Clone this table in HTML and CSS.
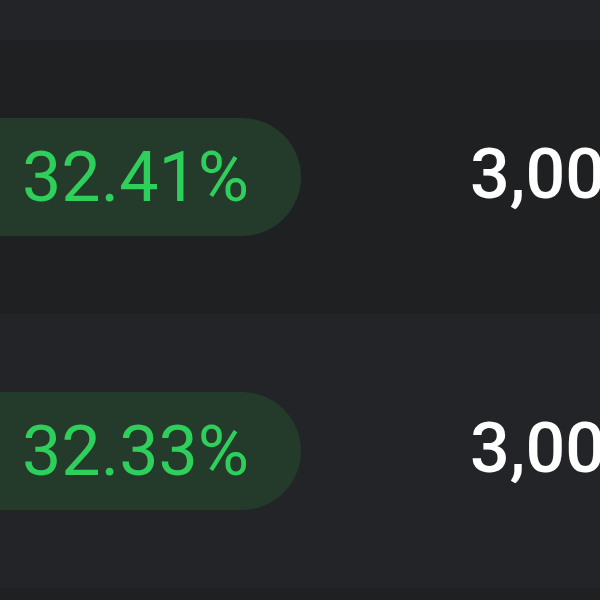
FILE: index.html
```html
<!DOCTYPE html>
<html>
<head>
<meta charset="utf-8">
<link rel="stylesheet" href="styles.css">
</head>
<body>
<div class="table">
  <div class="row row-alt row-top"></div>
  <div class="row">
    <div class="cell-pct"><span class="pill">32.41%</span></div>
    <div class="cell-val">3,000</div>
  </div>
  <div class="row row-alt">
    <div class="cell-pct"><span class="pill">32.33%</span></div>
    <div class="cell-val">3,000</div>
  </div>
  <div class="row row-bottom"></div>
</div>
</body>
</html>
```
FILE: styles.css
```css
html, body {
  margin: 0;
  padding: 0;
  background: #1f2022;
  width: 600px;
  height: 600px;
  overflow: hidden;
}
.table {
  display: flex;
  flex-direction: column;
  width: 600px;
  font-family: Roboto, "Liberation Sans", sans-serif;
}
.row {
  display: flex;
  align-items: center;
  height: 274px;
  background: #1f2022;
  flex-shrink: 0;
}
.row-alt {
  background: #232427;
}
.row-top {
  height: 40px;
}
.row-bottom {
  height: 12px;
}
.cell-pct {
  width: 470px;
  flex-shrink: 0;
}
.pill {
  display: inline-flex;
  align-items: center;
  height: 118px;
  margin-left: -60px;
  padding: 0 52px 0 82px;
  border-radius: 59px;
  background: #243a2b;
  color: #2fcf5c;
  font-size: 70px;
  line-height: 1;
}
.cell-val {
  color: #ffffff;
  font-size: 70px;
  font-weight: 500;
  white-space: nowrap;
  margin-top: -6px;
}
```
